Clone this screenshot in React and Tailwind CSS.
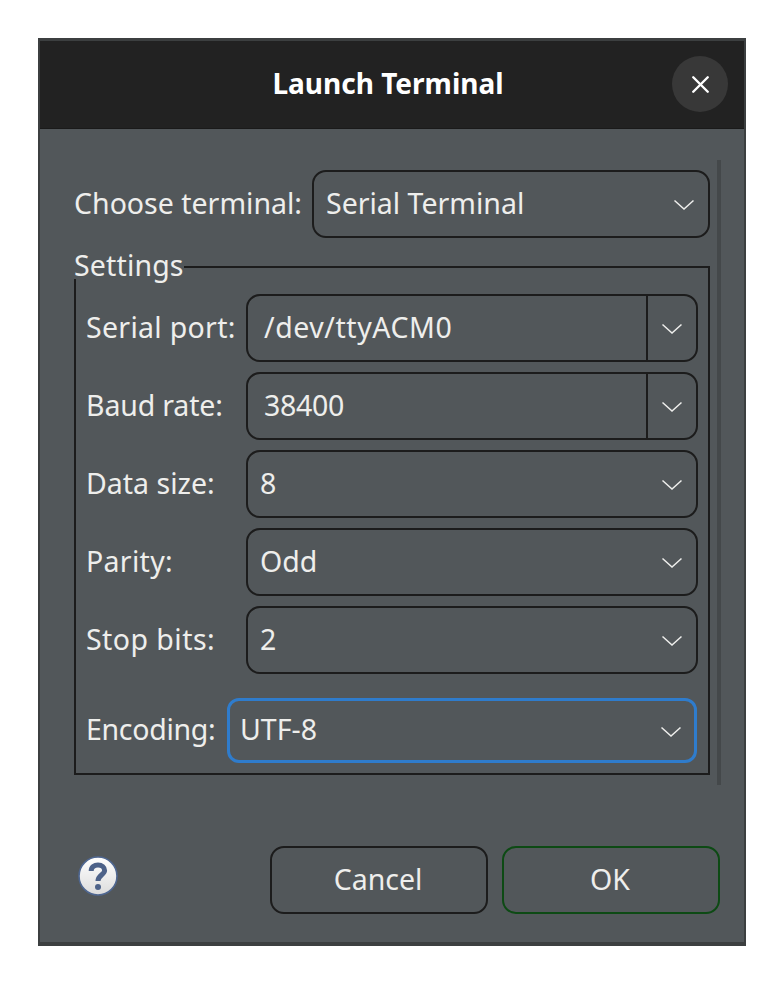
import React from "react";
import { X } from "lucide-react";

const rows = [
  { label: "Serial port:", value: "/dev/ttyACM0", entry: true, labelClass: "tracking-[0.3px]", valueClass: "tracking-[0.55px]" },
  { label: "Baud rate:", value: "38400", entry: true, labelClass: "tracking-[-0.15px]", valueClass: "tracking-[-0.3px]" },
  { label: "Data size:", value: "8" },
  { label: "Parity:", value: "Odd", labelClass: "tracking-[0.3px]" },
  { label: "Stop bits:", value: "2", labelClass: "tracking-[0.45px]" },
];

function Chevron() {
  return (
    <svg width="22" height="12" viewBox="0 0 22 12" fill="none" stroke="#eeeeec" strokeWidth="1.5" className="mt-[2px]">
      <path d="M1.5 1.5 L11 10 L20.5 1.5" />
    </svg>
  );
}

function Combo({ value, entry, valueClass = "", className }) {
  if (entry) {
    return (
      <div className="flex h-[68px] w-[452px] items-stretch rounded-[14px] border-2 border-[#1c1c1c]">
        <div className={`flex flex-1 items-center pb-[2px] pl-[16px] text-[28.5px] ${valueClass}`}>{value}</div>
        <div className="flex w-[50px] items-center justify-center border-l-2 border-[#1c1c1c]">
          <Chevron />
        </div>
      </div>
    );
  }
  return (
    <div className={`flex items-center justify-between rounded-[14px] border-2 border-[#1c1c1c] pr-[13px] pl-[12px] text-[28.5px] ${className}`}>
      <span className={`pb-[2px] ${valueClass}`}>{value}</span>
      <Chevron />
    </div>
  );
}

export default function App() {
  return (
    <div className="h-[984px] w-[784px] bg-white pt-[38px] pl-[38px] font-['Noto_Sans',sans-serif] text-[#eeeeec]">
      <div className="relative h-[908px] w-[708px] border-2 border-t-[3px] border-b-[4px] border-[#3c3f40] bg-[#52575a]">
        {/* HEADER */}
        <div className="relative flex h-[88px] items-center justify-center border-b border-[#1a1a1a] bg-[#222222] pr-[8px] pb-[4px]">
          <span className="text-[28px] font-bold text-white">Launch Terminal</span>
          <button className="absolute top-[15px] right-[16px] flex h-[56px] w-[56px] items-center justify-center rounded-full bg-[#383838]">
            <X size={29} strokeWidth={2} color="#ffffff" />
          </button>
        </div>

        {/* overlay scrollbar */}
        <div className="absolute top-[119px] left-[677px] h-[625px] w-[4px] bg-[#44484a]" />

        <div className="pt-[41px] pl-[34px]">
          <div className="flex items-center">
            <span className="w-[238px] pb-[2px] text-[28.5px]">Choose terminal:</span>
            <Combo value="Serial Terminal" className="h-[68px] w-[398px]" />
          </div>

          {/* SETTINGS */}
          <fieldset className="mt-[17px] h-[520px] w-[636px] border-2 border-[#1c1c1c]">
            <legend className="-ml-[2px] h-[24px] text-[28.5px] leading-[20px] tracking-[0.15px]">Settings</legend>
            <div className="flex flex-col gap-[10px] pt-[15px] pl-[10px]">
              {rows.map((r) => (
                <div key={r.label} className="flex items-center">
                  <span className={`w-[160px] pb-[2px] text-[28.5px] ${r.labelClass || ""}`}>{r.label}</span>
                  <Combo value={r.value} entry={r.entry} valueClass={r.valueClass} className="h-[68px] w-[452px]" />
                </div>
              ))}
              <div className="mt-[14px] flex items-center">
                <span className="w-[141px] pb-[2px] text-[28.5px] tracking-[-0.3px]">Encoding:</span>
                <div className="flex h-[65px] w-[470px] items-center justify-between rounded-[12px] border-[3px] border-[#2f7ccc] pr-[12px] pl-[10px] text-[28.5px]">
                  <span className="pb-[2px]">UTF-8</span>
                  <Chevron />
                </div>
              </div>
            </div>
          </fieldset>
        </div>

        {/* BUTTONS */}
        <div className="absolute right-[24px] bottom-[28px] left-[37px] flex items-center">
          <svg width="42" height="42" viewBox="0 0 42 42" className="mr-[151px] mb-[8px]">
            <defs>
              <linearGradient id="help" x1="0" y1="0" x2="0" y2="1">
                <stop offset="0" stopColor="#ffffff" />
                <stop offset="1" stopColor="#dcdcdc" />
              </linearGradient>
            </defs>
            <circle cx="21" cy="21" r="19" fill="url(#help)" stroke="#4f6791" strokeWidth="1.6" />
            <path d="M14.2 16 C14.2 11.8 17.4 10 21 10 C25 10 27.6 12.4 27.6 15.5 C27.6 19.6 21 20.2 21 26" fill="none" stroke="#4d6289" strokeWidth="5" />
            <circle cx="21" cy="32" r="3" fill="#4d6289" />
          </svg>
          <button className="flex h-[68px] w-[218px] items-center justify-center rounded-[14px] border-2 border-[#1c1c1c] pr-[2px] pb-[2px] text-[28.5px]">Cancel</button>
          <button className="ml-[14px] flex h-[68px] w-[218px] items-center justify-center rounded-[14px] border-2 border-[#0d4a14] pr-[2px] pb-[2px] text-[28.5px]">OK</button>
        </div>
      </div>
    </div>
  );
}
